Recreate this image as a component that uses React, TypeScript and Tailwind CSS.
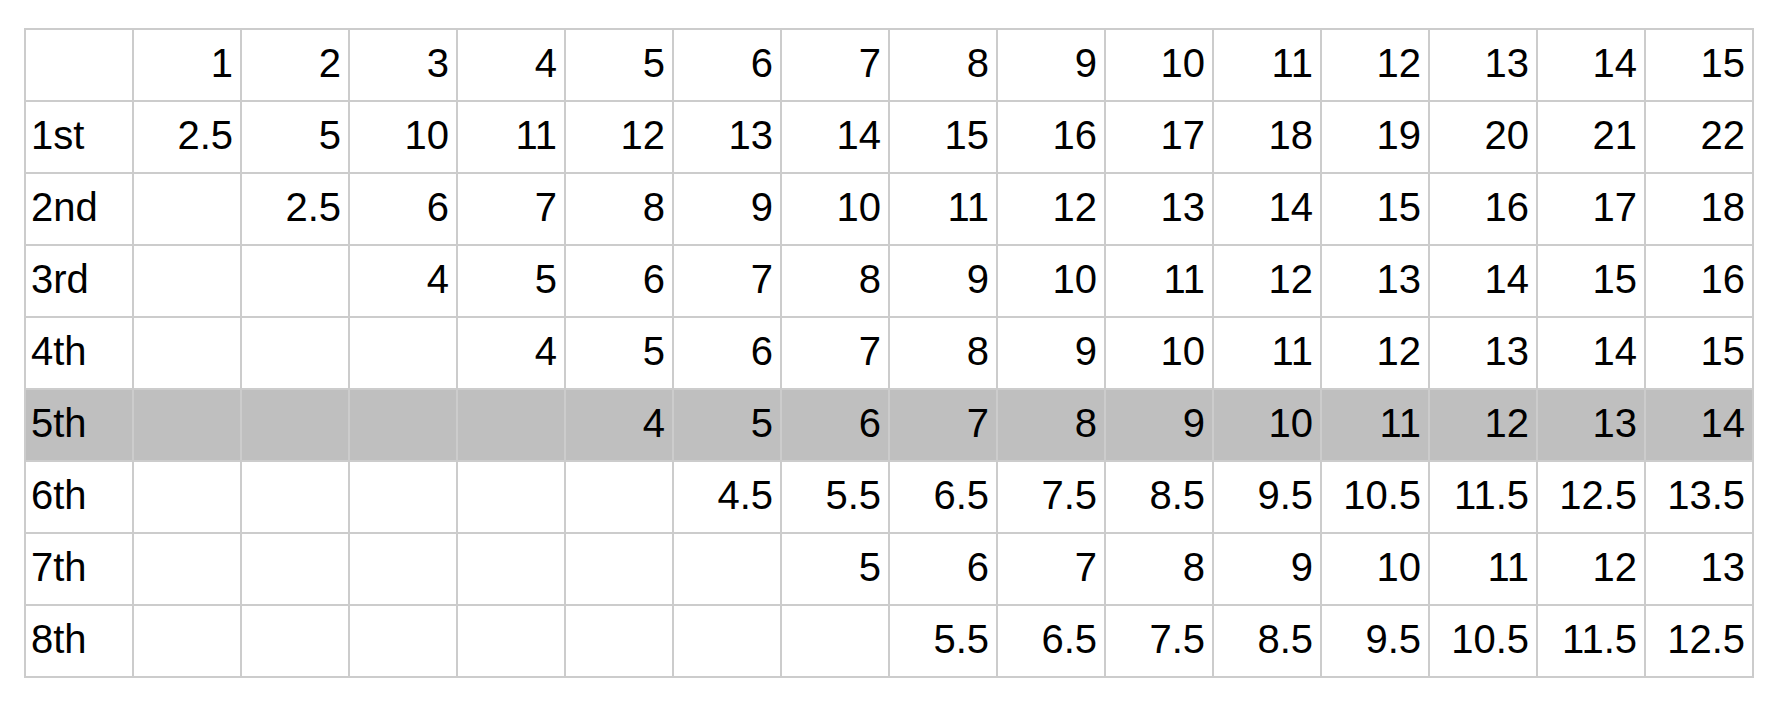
const headers = ['', '1', '2', '3', '4', '5', '6', '7', '8', '9', '10', '11', '12', '13', '14', '15']

const rows: { label: string; values: string[]; highlight?: boolean }[] = [
  { label: '1st', values: ['2.5', '5', '10', '11', '12', '13', '14', '15', '16', '17', '18', '19', '20', '21', '22'] },
  { label: '2nd', values: ['', '2.5', '6', '7', '8', '9', '10', '11', '12', '13', '14', '15', '16', '17', '18'] },
  { label: '3rd', values: ['', '', '4', '5', '6', '7', '8', '9', '10', '11', '12', '13', '14', '15', '16'] },
  { label: '4th', values: ['', '', '', '4', '5', '6', '7', '8', '9', '10', '11', '12', '13', '14', '15'] },
  { label: '5th', values: ['', '', '', '', '4', '5', '6', '7', '8', '9', '10', '11', '12', '13', '14'], highlight: true },
  { label: '6th', values: ['', '', '', '', '', '4.5', '5.5', '6.5', '7.5', '8.5', '9.5', '10.5', '11.5', '12.5', '13.5'] },
  { label: '7th', values: ['', '', '', '', '', '', '5', '6', '7', '8', '9', '10', '11', '12', '13'] },
  { label: '8th', values: ['', '', '', '', '', '', '', '5.5', '6.5', '7.5', '8.5', '9.5', '10.5', '11.5', '12.5'] },
]

function Cell({ text, left, grey }: { text: string; left?: boolean; grey?: boolean }) {
  return (
    <div
      className={`h-[70px] leading-[66px] pl-[5px] pr-[7px] whitespace-nowrap overflow-hidden ${
        left ? 'text-left' : 'text-right'
      } ${grey ? 'bg-[#bfbfbf]' : 'bg-white'}`}
    >
      {text}
    </div>
  )
}

export default function App() {
  return (
    <div className="min-h-screen bg-white pt-[28px] pl-[24px] text-black text-[40px] font-['Liberation_Sans',Arial,sans-serif]">
      <div className="grid grid-cols-[repeat(16,106px)] gap-[2px] p-[2px] bg-[#cccccc] w-fit">
        {headers.map((h, i) => (
          <Cell key={`h${i}`} text={h} />
        ))}
        {rows.map((r) => (
          <div key={r.label} className="contents">
            <Cell text={r.label} left grey={r.highlight} />
            {r.values.map((v, i) => (
              <Cell key={i} text={v} grey={r.highlight} />
            ))}
          </div>
        ))}
      </div>
    </div>
  )
}
